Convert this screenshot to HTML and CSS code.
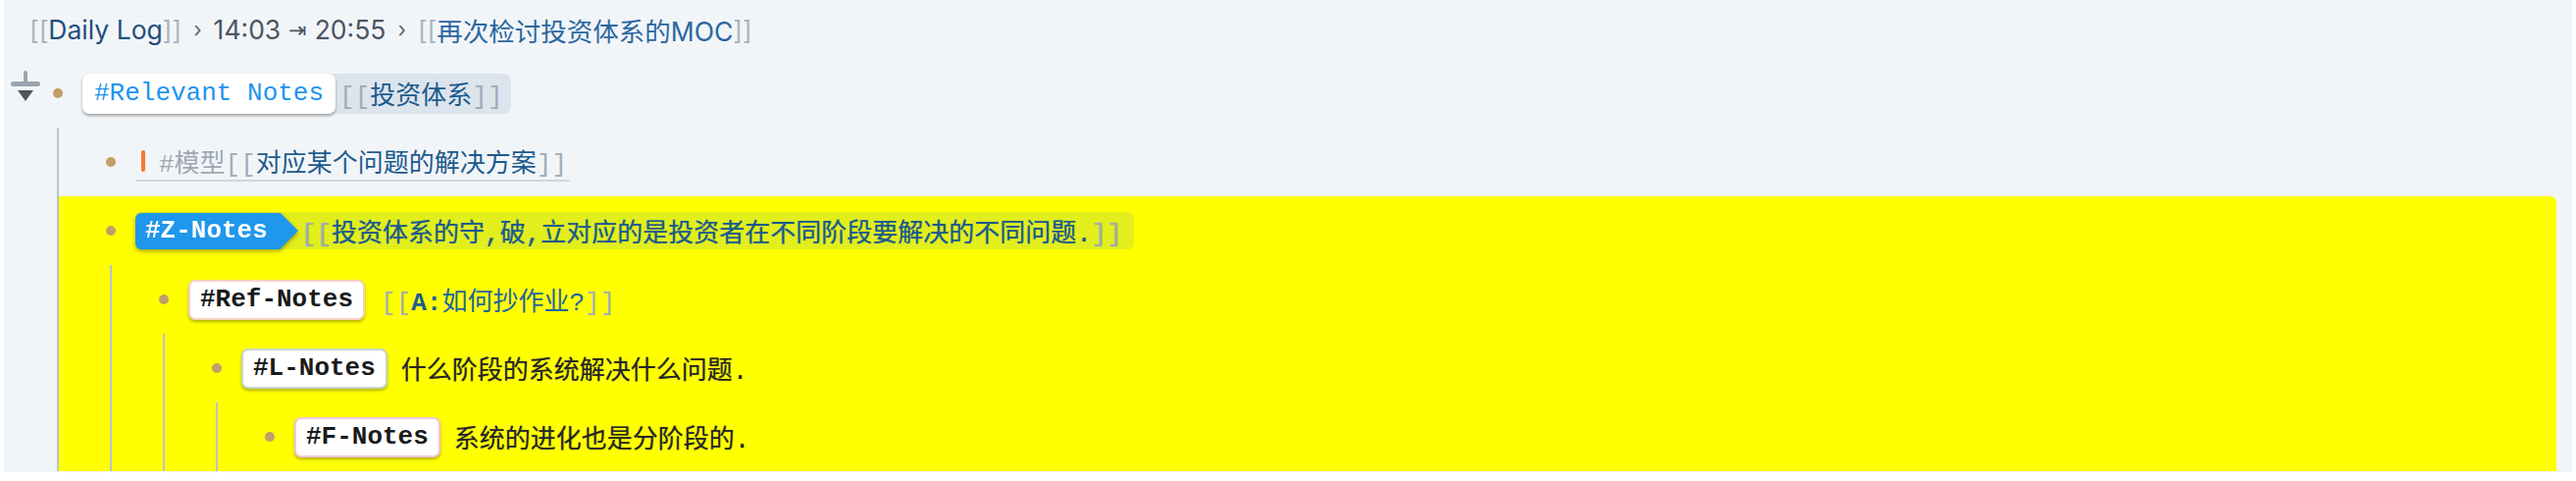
FILE: index.html
```html
<!DOCTYPE html>
<html lang="zh">
<head>
<meta charset="utf-8">
<title>Outline</title>
<link rel="stylesheet" href="styles.css">
</head>
<body>
<div class="page">
  <div class="crumbs">
    <span class="br">[[</span><span class="c-link">Daily Log</span><span class="br">]]</span>
    <span class="sep">›</span>
    <span class="time">14:03</span><span class="arrow">⇥</span><span class="time">20:55</span>
    <span class="sep">›</span>
    <span class="br">[[</span><span class="c-link2">再次检讨投资体系的MOC</span><span class="br">]]</span>
  </div>

  <div class="outline">
    <div class="block">
      <div class="row">
        <svg class="toggle" width="32" height="36" viewBox="0 0 32 36">
          <rect x="14" y="2" width="4" height="15" rx="2" fill="#9ba5af"/>
          <rect x="1" y="13" width="30" height="5" rx="2.5" fill="#9ba5af"/>
          <polygon points="8,22 24,22 16,33" fill="#4e555e"/>
        </svg>
        <span class="bullet"></span>
        <div class="content">
          <span class="pill">
            <span class="tag tag-rel">#Relevant Notes</span>
            <span class="link"><span class="br">[[</span>投资体系<span class="br">]]</span></span>
          </span>
        </div>
      </div>
      <div class="children">
        <div class="block">
          <div class="row">
            <span class="bullet"></span>
            <div class="content">
              <span class="model">
                <span class="bar"></span>
                <span class="tag-model">#模型</span>
                <span class="link"><span class="br">[[</span>对应某个问题的解决方案<span class="br">]]</span></span>
              </span>
            </div>
          </div>
        </div>

        <div class="block hl">
          <div class="row">
            <span class="bullet"></span>
            <div class="content">
              <span class="zpill">
                <span class="ztag">#Z-Notes</span>
                <span class="link zlink"><span class="br">[[</span>投资体系的守,破,立对应的是投资者在不同阶段要解决的不同问题.<span class="br">]]</span></span>
              </span>
            </div>
          </div>
          <div class="children">
            <div class="block">
              <div class="row">
                <span class="bullet"></span>
                <div class="content">
                  <span class="tag tag-b tag-ref">#Ref-Notes</span>
                  <span class="link reflink"><span class="br">[[</span><b>A:</b>如何抄作业?<span class="br">]]</span></span>
                </div>
              </div>
              <div class="children">
                <div class="block">
                  <div class="row">
                    <span class="bullet"></span>
                    <div class="content">
                      <span class="tag tag-b tag-l">#L-Notes</span>
                      <span class="text">什么阶段的系统解决什么问题.</span>
                    </div>
                  </div>
                  <div class="children">
                    <div class="block">
                      <div class="row">
                        <span class="bullet"></span>
                        <div class="content">
                          <span class="tag tag-b tag-f">#F-Notes</span>
                          <span class="text">系统的进化也是分阶段的.</span>
                        </div>
                      </div>
                    </div>
                  </div>
                </div>
              </div>
            </div>
          </div>
        </div>
      </div>
    </div>
  </div>
</div>
</body>
</html>
```

FILE: styles.css
```css
body {
  margin: 0;
  background: #ffffff;
}

.page {
  margin-left: 4px;
  width: 2618px;
  height: 481px;
  background: #f2f5f8;
  overflow: hidden;
  font-family: "Liberation Mono", "Noto Sans CJK SC", monospace;
  font-size: 26px;
}

/* breadcrumb */
.crumbs {
  height: 60px;
  display: flex;
  align-items: center;
  padding-left: 26px;
  font-family: Inter, "Noto Sans CJK SC", sans-serif;
  font-size: 26.5px;
  color: #4b5563;
  white-space: nowrap;
}
.crumbs .br { color: #a9b4c0; }
.c-link { color: #1f4f7c; }
.c-link2 { color: #2a67a0; }
.sep {
  color: #5f6873;
  font-size: 22px;
  margin: 0 12px;
}
.arrow {
  font-family: "DejaVu Sans", sans-serif;
  font-size: 22px;
  margin: 0 8px;
  color: #4b5563;
}

/* outline */
.outline {
  padding: 0 16px 0 45px;
}
.row {
  position: relative;
  display: flex;
  align-items: center;
  height: 70px;
}
.toggle {
  position: absolute;
  left: -39px;
  top: 10px;
}
.bullet {
  flex: none;
  width: 20px;
  display: flex;
  justify-content: center;
}
.bullet::before {
  content: "";
  width: 10px;
  height: 10px;
  border-radius: 50%;
  background: #c29e68;
}
.content {
  margin-left: 15px;
  display: flex;
  align-items: center;
  white-space: pre;
}
.children {
  margin-left: 9px;
  border-left: 2px solid #b8c3ce;
}
.children > .block {
  padding-left: 43px;
}
.hl {
  background: #ffff00;
  border-top-right-radius: 6px;
}

.link { color: #1c5a8e; }
.br { color: #a0acb8; }

/* tags */
.tag {
  box-sizing: border-box;
  height: 41px;
  display: flex;
  align-items: center;
  padding: 0 12px;
  background: #ffffff;
  border-radius: 7px;
  box-shadow: 0 2px 3px rgba(0, 0, 0, 0.35);
}
.tag-rel { color: #1e93ee; }

.pill {
  display: flex;
  align-items: center;
  height: 41px;
  background: #dce4ed;
  border-radius: 8px;
  padding-right: 8px;
}
.pill .link { margin-left: 4px; }

.model {
  display: flex;
  align-items: center;
  box-sizing: border-box;
  height: 40px;
  padding: 0 3px 0 6px;
  border-bottom: 2px solid #cdd6df;
}
.bar {
  width: 4px;
  height: 22px;
  border-radius: 2px;
  background: #f47a2c;
  margin-right: 14px;
}
.tag-model { color: #9ea8b3; }

.zpill {
  display: flex;
  align-items: center;
  height: 38px;
  background: #e3ef1d;
  border-radius: 6px;
  padding-right: 12px;
}
.ztag {
  position: relative;
  box-sizing: border-box;
  height: 37px;
  display: flex;
  align-items: center;
  padding: 0 13px 0 10px;
  background: #1e97ec;
  color: #ffffff;
  font-weight: bold;
  border-radius: 6px 0 0 6px;
  filter: drop-shadow(0 2px 2px rgba(0, 0, 0, 0.35));
}
.ztag::after {
  content: "";
  position: absolute;
  left: 100%;
  top: 0;
  border-left: 18px solid #1e97ec;
  border-top: 18.5px solid transparent;
  border-bottom: 18.5px solid transparent;
}
.zlink {
  margin-left: 21px;
  color: #1b5a8c;
  text-shadow: 0 0 1px rgba(27, 90, 140, 0.6);
}

.tag-b {
  font-weight: bold;
  color: #1a1a1a;
  padding: 0 10px;
  border: 2px solid;
  box-shadow: 0 2px 3px rgba(0, 0, 0, 0.3);
}
.tag-ref { border-color: #f6d2c4; }
.tag-l { border-color: #c8d5c9; }
.tag-f { border-color: #f5c5dd; }

.reflink { margin-left: 16px; color: #1f64a0; }
.reflink b { color: #1b5d94; }

.text {
  margin-left: 14px;
  color: #262626;
  text-shadow: 0 0 1px rgba(40, 40, 40, 0.5);
}
```
